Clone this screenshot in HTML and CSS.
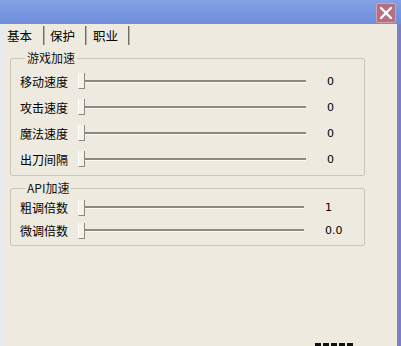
FILE: index.html
```html
<!DOCTYPE html>
<html>
<head>
<meta charset="utf-8">
<link rel="stylesheet" href="styles.css">
</head>
<body>
<div class="window">
  <div class="titlebar">
    <div class="close">
      <svg width="14" height="14" viewBox="0 0 14 14"><path d="M2 2 L12 12 M12 2 L2 12" stroke="#fff" stroke-width="2.4" stroke-linecap="round"/></svg>
    </div>
  </div>
  <div class="client">
    <div class="edge-left"></div>
    <div class="content">
      <div class="tabs">
        <div class="tab tab-active">基本</div>
        <div class="tab">保护</div>
        <div class="tab tab-last">职业</div>
      </div>
      <div class="page">
        <fieldset class="group group-speed">
          <legend>游戏加速</legend>
          <div class="row"><span class="label">移动速度</span><span class="slider"><span class="thumb"></span><span class="track"></span></span><span class="value">0</span></div>
          <div class="row"><span class="label">攻击速度</span><span class="slider"><span class="thumb"></span><span class="track"></span></span><span class="value">0</span></div>
          <div class="row"><span class="label">魔法速度</span><span class="slider"><span class="thumb"></span><span class="track"></span></span><span class="value">0</span></div>
          <div class="row"><span class="label">出刀间隔</span><span class="slider"><span class="thumb"></span><span class="track"></span></span><span class="value">0</span></div>
        </fieldset>
        <fieldset class="group group-api">
          <legend>API加速</legend>
          <div class="row"><span class="label">粗调倍数</span><span class="slider short"><span class="thumb"></span><span class="track"></span></span><span class="value">1</span></div>
          <div class="row"><span class="label">微调倍数</span><span class="slider short"><span class="thumb"></span><span class="track"></span></span><span class="value">0.0</span></div>
        </fieldset>
      </div>
      <div class="footer"><span class="status-mark"></span></div>
    </div>
    <div class="edge-right"></div>
  </div>
</div>
</body>
</html>
```
FILE: styles.css
```css
html, body {
  margin: 0;
  padding: 0;
}
body {
  width: 401px;
  height: 346px;
  overflow: hidden;
  background: #eeeadf;
  font-family: "Noto Sans CJK SC", "Noto Sans", sans-serif;
  font-size: 12px;
  color: #000;
}
.window {
  display: flex;
  flex-direction: column;
  height: 346px;
  overflow: hidden;
}
.titlebar {
  height: 24px;
  flex: none;
  background: linear-gradient(to bottom, #86a2e6 0%, #7896e0 50%, #6f8edb 100%);
  display: flex;
  justify-content: flex-end;
  align-items: flex-start;
  padding-right: 5px;
  box-sizing: border-box;
  padding-top: 3px;
}
.close {
  width: 20px;
  height: 20px;
  box-sizing: border-box;
  background: #b46f80;
  border: 1px solid #cfa3b3;
  border-radius: 2px;
  display: flex;
  align-items: center;
  justify-content: center;
}
.client {
  flex: 1;
  display: flex;
  min-height: 0;
}
.edge-left {
  width: 3px;
  background: #e6ebf2;
  flex: none;
}
.edge-right {
  width: 4px;
  background: #7b80c6;
  flex: none;
}
.content {
  flex: 1;
  display: flex;
  flex-direction: column;
  min-width: 0;
}
.tabs {
  display: flex;
  height: 21px;
  padding-top: 2px;
  box-sizing: border-box;
  align-items: stretch;
  font-size: 12.5px;
}
.tab {
  padding: 0 10px 0 6px;
  display: flex;
  align-items: center;
  border-right: 1px solid #6f6f68;
  box-shadow: 1px 0 0 #b4b2a8;
  line-height: 14px;
}
.tab-active {
  padding-left: 4px;
  padding-right: 11px;
}
.tab-last {
  padding-left: 7px;
  padding-right: 10px;
}
.page {
  padding: 6px 0 0 7px;
}
.group {
  width: 355px;
  box-sizing: border-box;
  margin: 0;
  border: 1px solid #c9c6b8;
  border-radius: 2px;
  padding: 3px 0 3px 9px;
}
.group legend {
  padding: 0 2px;
  margin-left: 5px;
  line-height: 14px;
  color: #111;
}
.group-api {
  margin-top: 5px;
  padding-top: 1px;
  padding-bottom: 3px;
}
.row {
  display: flex;
  align-items: center;
  height: 26px;
}
.group-api .row {
  height: 23px;
}
.label {
  width: 58px;
  flex: none;
}
.slider {
  width: 228px;
  height: 16px;
  display: flex;
  align-items: center;
  flex: none;
}
.slider.short {
  width: 226px;
}
.thumb {
  width: 7px;
  height: 16px;
  box-sizing: border-box;
  background: #f4f2ea;
  border-left: 1px solid #ffffff;
  border-right: 1px solid #8a8980;
  border-bottom: 1px solid #8a8980;
  flex: none;
}
.track {
  flex: 1;
  height: 2px;
  background: #8b8a7e;
  border-bottom: 1px solid #fbfaf6;
}
.value {
  margin-left: 21px;
  font-family: "DejaVu Sans", "Liberation Sans", sans-serif;
  font-size: 11px;
}
.footer {
  flex: 1;
  display: flex;
  justify-content: flex-end;
  align-items: flex-end;
  padding-right: 42px;
}
.status-mark {
  width: 40px;
  height: 3px;
  background: repeating-linear-gradient(to right, #111 0 6px, #eeeadf 6px 8px);
}
```
